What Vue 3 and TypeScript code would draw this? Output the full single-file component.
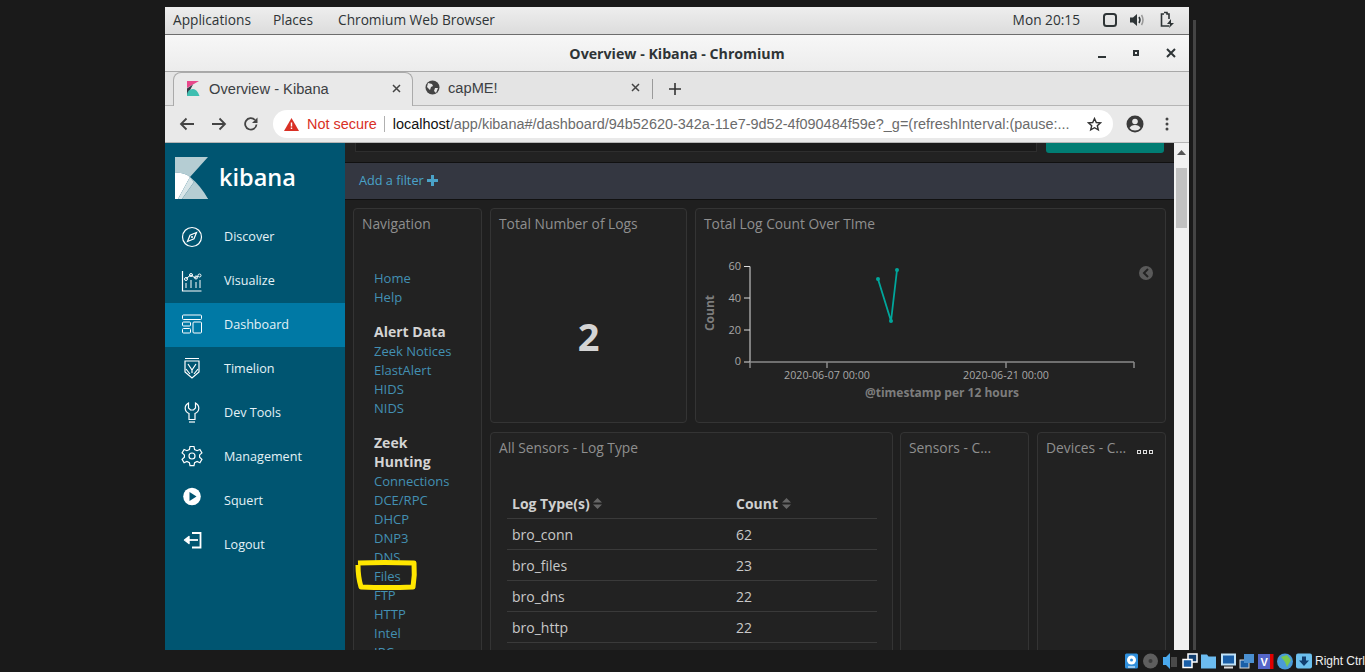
<script setup lang="ts">
interface NavGroup {
  titulo?: string
  links: string[]
}

const sideItems = [
  { nome: 'Discover', icone: 'discover' },
  { nome: 'Visualize', icone: 'visualize' },
  { nome: 'Dashboard', icone: 'dashboard' },
  { nome: 'Timelion', icone: 'timelion' },
  { nome: 'Dev Tools', icone: 'devtools' },
  { nome: 'Management', icone: 'management' },
  { nome: 'Squert', icone: 'squert' },
  { nome: 'Logout', icone: 'logout' }
]

const navGroups: NavGroup[] = [
  { links: ['Home', 'Help'] },
  { titulo: 'Alert Data', links: ['Zeek Notices', 'ElastAlert', 'HIDS', 'NIDS'] },
  {
    titulo: 'Zeek Hunting',
    links: ['Connections', 'DCE/RPC', 'DHCP', 'DNP3', 'DNS', 'Files', 'FTP', 'HTTP', 'Intel', 'IRC']
  }
]

const logRows = [
  { tipo: 'bro_conn', total: 62 },
  { tipo: 'bro_files', total: 23 },
  { tipo: 'bro_dns', total: 22 },
  { tipo: 'bro_http', total: 22 }
]
</script>

<template>
  <div class="screen">
    <div class="vm">
      <div class="gnomeBar">
        <span>Applications</span>
        <span>Places</span>
        <span class="appName">Chromium Web Browser</span>
        <span class="clock">Mon 20:15</span>
        <svg class="trayIcon first" width="16" height="16" viewBox="0 0 16 16">
          <rect x="2" y="2" width="12" height="12" rx="2.500" fill="none" stroke="#2e3436" stroke-width="2" />
        </svg>
        <svg class="trayIcon second" width="17" height="16" viewBox="0 0 17 16">
          <path d="M1 5.500h3l4-3.500v12l-4-3.500h-3z" fill="#2e3436" />
          <path d="M10 5q2 3 0 6" fill="none" stroke="#2e3436" stroke-width="1.500" />
          <path d="M12.500 3q3 5 0 10" fill="none" stroke="#999" stroke-width="1.500" />
        </svg>
        <svg class="trayIcon" width="16" height="18" viewBox="0 0 16 18">
          <path d="M5 1.500h3v1.500h2v5M10 15h-7.500v-12h2.500" fill="none" stroke="#2e3436" stroke-width="1.600" />
          <path d="M12 8l-4 5h3l-1 4 5-5h-3z" fill="#2e3436" />
        </svg>
      </div>

      <div class="titleBar">
        <span class="titleText">Overview - Kibana - Chromium</span>
        <div class="winButtons">
          <i class="winMin"></i>
          <i class="winMax"></i>
          <svg width="10" height="10" viewBox="0 0 10 10">
            <path d="M1 1l8 8M9 1l-8 8" stroke="#2e3436" stroke-width="2" />
          </svg>
        </div>
      </div>

      <div class="tabStrip">
        <div class="tab active">
          <svg width="13" height="15" viewBox="0 0 13 15">
            <path d="M0 0h12L0 7z" fill="#e8488b" />
            <path d="M0 7.500L6 3.500 0 15z" fill="#343741" />
            <path d="M0 15q0-7 6-7 4 0 6.500 7z" fill="#3ebeb0" />
          </svg>
          <span class="tabName">Overview - Kibana</span>
          <svg class="tabClose" width="9" height="9" viewBox="0 0 9 9">
            <path d="M1 1l7 7M8 1l-7 7" stroke="#444" stroke-width="1.500" />
          </svg>
        </div>
        <div class="tab second">
          <svg width="15" height="15" viewBox="0 0 15 15">
            <circle cx="7.500" cy="7.500" r="7" fill="#444" />
            <path d="M3 3l4 1 1 2-2 1-1 3-3-3zM10 8l3 0-2 5-2-2z" fill="#e8e8e8" />
          </svg>
          <span class="tabName">capME!</span>
          <svg class="tabClose" width="9" height="9" viewBox="0 0 9 9">
            <path d="M1 1l7 7M8 1l-7 7" stroke="#444" stroke-width="1.500" />
          </svg>
        </div>
        <i class="tabSep"></i>
        <svg class="newTab" width="12" height="12" viewBox="0 0 12 12">
          <path d="M6 0v12M0 6h12" stroke="#333" stroke-width="1.600" />
        </svg>
      </div>

      <div class="toolBar">
        <svg width="16" height="14" viewBox="0 0 16 14">
          <path d="M15 7H2M7.500 1.500L2 7l5.500 5.500" fill="none" stroke="#444" stroke-width="1.800" />
        </svg>
        <svg width="16" height="14" viewBox="0 0 16 14">
          <path d="M1 7h13M8.500 1.500L14 7l-5.500 5.500" fill="none" stroke="#444" stroke-width="1.800" />
        </svg>
        <svg width="16" height="16" viewBox="0 0 16 16">
          <path d="M13.500 8.500a5.700 5.700 0 1 1-1.500-4.500" fill="none" stroke="#444" stroke-width="1.800" />
          <path d="M14.500 1.500v5.500h-5.500z" fill="#444" />
        </svg>
        <div class="urlBar">
          <svg width="15" height="13" viewBox="0 0 15 13">
            <path d="M7.500 0L15 13H0z" fill="#d93025" />
            <path d="M6.800 4.500h1.400v4h-1.400zM6.800 9.500h1.400v1.400h-1.400z" fill="#fff" />
          </svg>
          <span class="notSecure">Not secure</span>
          <i class="urlSep"></i>
          <span class="url"><b>localhost</b>/app/kibana#/dashboard/94b52620-342a-11e7-9d52-4f090484f59e?_g=(refreshInterval:(pause:...</span>
          <svg class="star" width="15" height="15" viewBox="0 0 15 15">
            <path d="M7.500 1.500l1.800 4 4.200.4-3.200 2.800 1 4.200-3.800-2.200-3.800 2.200 1-4.200-3.200-2.800 4.200-.4z" fill="none" stroke="#333" stroke-width="1.400" />
          </svg>
        </div>
        <svg class="account" width="18" height="18" viewBox="0 0 18 18">
          <circle cx="9" cy="9" r="8.500" fill="#3a3a3a" />
          <circle cx="9" cy="6.500" r="2.800" fill="#e8e8e8" />
          <path d="M3.500 13q1.500-3 5.500-3t5.500 3q-2 2.500-5.500 2.500t-5.500-2.500z" fill="#e8e8e8" />
        </svg>
        <svg class="dots" width="4" height="14" viewBox="0 0 4 14">
          <circle cx="2" cy="2" r="1.500" fill="#444" />
          <circle cx="2" cy="7" r="1.500" fill="#444" />
          <circle cx="2" cy="12" r="1.500" fill="#444" />
        </svg>
      </div>

      <div class="page">
        <aside class="sidebar">
          <div class="logoRow">
            <svg width="33" height="42" viewBox="0 0 33 42">
              <path d="M0 0h33L15 20Q8 15 0 16z" fill="#b5cdd3" />
              <path d="M0 16Q8 15 15 20L3 42H0z" fill="#fff" />
              <path d="M3 42l12-22 4 5-12 17z" fill="#d8e5e8" />
              <path d="M7 42l12-17q7 8 14 17z" fill="#b5cdd3" />
              <path d="M15 20q11 9 18 22h-4q-5-11-12-19z" fill="#b5cdd3" />
            </svg>
            <span class="logoText">kibana</span>
          </div>
          <div
            v-for="item in sideItems"
            :key="item.nome"
            class="sideItem"
            :class="{ selected: item.nome === 'Dashboard' }"
          >
            <svg class="sideIcon" width="24" height="24" viewBox="0 0 24 24" fill="none" stroke="#fff" stroke-width="1">
              <template v-if="item.icone === 'discover'">
                <circle cx="12" cy="13" r="9.500" stroke-width="1.200" />
                <path d="M16.500 8.500l-6.500 2.800-2.500 6.200 6.500-2.700z" stroke-width="1.200" />
                <circle cx="12" cy="13" r="1" fill="#fff" stroke="none" />
              </template>
              <template v-else-if="item.icone === 'visualize'">
                <path d="M2.500 3v20h19" stroke-width="1.200" />
                <path d="M6 10.500l5-3.500 4 3 3-2" />
                <circle cx="6" cy="11" r="1.500" />
                <circle cx="11" cy="7" r="1.500" />
                <circle cx="16" cy="9.500" r="1.500" />
                <circle cx="19.500" cy="7.500" r="1.500" />
                <path d="M6 15v5M11 12v8M16 14v6M20 12v8" />
              </template>
              <template v-else-if="item.icone === 'dashboard'">
                <rect x="2.500" y="3" width="19" height="4.500" rx="1" />
                <rect x="2.500" y="10" width="8" height="4" rx="1" />
                <rect x="2.500" y="16.500" width="8" height="4.500" rx="1" />
                <rect x="13" y="10" width="8.500" height="11" rx="1" />
              </template>
              <template v-else-if="item.icone === 'timelion'">
                <path d="M5 2.500h14M5 5h14v11l-7 6-7-6z" stroke-width="1.200" />
                <path d="M8 8l4 6 4-6M12 14v3M6 13l4 5M18 13l-4 5" stroke-width="1.200" />
              </template>
              <template v-else-if="item.icone === 'devtools'">
                <path d="M8.500 3q-3.500 2-3.300 5.500.2 3.500 3.800 5v6h6v-6q3.600-1.500 3.800-5 .2-3.500-3.300-5.500v5l-2 2h-3l-2-2z" stroke-width="1.200" />
                <path d="M9 22h6" stroke-width="1.200" />
              </template>
              <template v-else-if="item.icone === 'management'">
                <path d="M10 2.500h4l.6 3 2.500 1.200 2.800-1.200 2 3.400-2.300 2 0 2.400 2.300 2-2 3.400-2.800-1.200-2.500 1.200-.6 3h-4l-.6-3-2.500-1.200-2.800 1.200-2-3.400 2.300-2 0-2.400-2.300-2 2-3.400 2.800 1.200 2.500-1.200z" stroke-width="1.200" />
                <circle cx="12" cy="12" r="3" stroke-width="1.200" />
              </template>
              <template v-else-if="item.icone === 'squert'">
                <circle cx="12" cy="8.500" r="8.800" fill="#fff" stroke="none" />
                <path d="M9.500 4l7 4.500-7 4.500z" fill="#005571" stroke="none" />
              </template>
              <template v-else>
                <path d="M12 1h8.500v14.500H12" stroke-width="1.800" />
                <path d="M18 8H8" stroke-width="1.800" />
                <path d="M9 4.500L4.500 8 9 11.500z" fill="#fff" stroke-width="1.400" stroke-linejoin="round" />
              </template>
            </svg>
            <span>{{ item.nome }}</span>
          </div>
        </aside>

        <main class="main">
          <div class="queryRow">
            <div class="queryInput"></div>
            <div class="queryButton"></div>
          </div>
          <div class="filterBar">
            <span>Add a filter</span>
            <svg width="11" height="11" viewBox="0 0 11 11">
              <path d="M5.500 0v11M0 5.500h11" stroke="#4aa3c9" stroke-width="3" />
            </svg>
          </div>

          <div class="dashboard">
            <section class="panel navPanel">
              <h3 class="panelTitle">Navigation</h3>
              <div class="navBody">
                <div v-for="(grupo, i) in navGroups" :key="i" class="navGroup">
                  <h4 v-if="grupo.titulo">{{ grupo.titulo }}</h4>
                  <a v-for="link in grupo.links" :key="link">{{ link }}</a>
                </div>
              </div>
              <svg class="marker" width="66" height="34" viewBox="0 0 66 34">
                <path d="M5 5q25-1 56 0 1 12-1 24-26 1-52 0-3-10-3-22" fill="none" stroke="#ffe600" stroke-width="5" stroke-linejoin="round" />
              </svg>
            </section>

            <div class="panelColumn">
              <div class="rowTop">
                <section class="panel totalPanel">
                  <h3 class="panelTitle">Total Number of Logs</h3>
                  <div class="bigNumber">2</div>
                </section>
                <section class="panel chartPanel">
                  <h3 class="panelTitle">Total Log Count Over TIme</h3>
                  <svg class="chart" width="469" height="175" viewBox="0 0 469 175">
                    <g fill="#a8a8a8" font-size="11" text-anchor="end">
                      <text x="45" y="31">60</text>
                      <text x="45" y="63">40</text>
                      <text x="45" y="95">20</text>
                      <text x="45" y="126">0</text>
                    </g>
                    <path d="M54 27.500v96M48 27.500h6M48 59h6M48 91h6M48 123h6" stroke="#ddd" fill="none" />
                    <path d="M54 123h384M54 123v6M131 123v6M310 123v6M438 123v6" stroke="#8a8a8a" stroke-width="1.500" fill="none" />
                    <text x="131" y="140" fill="#a8a8a8" font-size="10.700" text-anchor="middle">2020-06-07 00:00</text>
                    <text x="310" y="140" fill="#a8a8a8" font-size="10.700" text-anchor="middle">2020-06-21 00:00</text>
                    <text x="246" y="158" fill="#7d7d7d" font-size="12" font-weight="700" text-anchor="middle">@timestamp per 12 hours</text>
                    <text transform="translate(18 74) rotate(-90)" fill="#7d7d7d" font-size="12" font-weight="700" text-anchor="middle">Count</text>
                    <path d="M182 40l13 42 6-51" fill="none" stroke="#00a69b" stroke-width="1.800" />
                    <circle cx="182" cy="40" r="2" fill="#00a69b" />
                    <circle cx="195" cy="82" r="2" fill="#00a69b" />
                    <circle cx="201" cy="31" r="2" fill="#00a69b" />
                    <circle cx="450" cy="34" r="7" fill="#5a5a5a" />
                    <path d="M452 30l-4 4 4 4" fill="none" stroke="#222" stroke-width="2" />
                  </svg>
                </section>
              </div>
              <div class="rowBottom">
                <section class="panel logPanel">
                  <h3 class="panelTitle">All Sensors - Log Type</h3>
                  <table class="logTable">
                    <thead>
                      <tr>
                        <th>
                          Log Type(s)
                          <svg width="9" height="11" viewBox="0 0 9 11"><path d="M4.500 0L9 4.500H0zM4.500 11L0 6.500h9z" fill="#666" /></svg>
                        </th>
                        <th>
                          Count
                          <svg width="9" height="11" viewBox="0 0 9 11"><path d="M4.500 0L9 4.500H0zM4.500 11L0 6.500h9z" fill="#666" /></svg>
                        </th>
                      </tr>
                    </thead>
                    <tbody>
                      <tr v-for="linha in logRows" :key="linha.tipo">
                        <td>{{ linha.tipo }}</td>
                        <td>{{ linha.total }}</td>
                      </tr>
                    </tbody>
                  </table>
                </section>
                <section class="panel smallPanel">
                  <h3 class="panelTitle">Sensors - C...</h3>
                </section>
                <section class="panel smallPanel">
                  <h3 class="panelTitle">Devices - C...</h3>
                  <div class="panelMenu"><i></i><i></i><i></i></div>
                </section>
              </div>
            </div>
          </div>
        </main>

        <div class="scrollBar">
          <svg width="9" height="5" viewBox="0 0 9 5"><path d="M4.500 0L9 5H0z" fill="#555" /></svg>
          <div class="thumb"></div>
        </div>
      </div>
    </div>
    <i class="hostScroll"></i>

    <div class="hostBar">
      <svg width="188" height="18" viewBox="0 0 188 18">
        <rect x="0" y="1.500" width="13" height="15" rx="1.500" fill="#2f8fdc" />
        <circle cx="6.500" cy="8" r="4.500" fill="#fff" />
        <circle cx="6.500" cy="8" r="1.500" fill="#2f8fdc" />
        <path d="M3 15h7" stroke="#fff" />
        <circle cx="25.500" cy="9" r="7.500" fill="#5e5e5e" />
        <circle cx="25.500" cy="9" r="2" fill="#3a3a3a" />
        <path d="M38 5h3l4-4v16l-4-4h-3z" fill="#4aa8ec" />
        <rect x="46" y="5" width="6" height="10" fill="#4a4a4a" />
        <rect x="63" y="2" width="9" height="8" fill="#123f70" stroke="#fff" stroke-width="1.500" />
        <rect x="58" y="7.500" width="9" height="8" fill="#1a5fa8" stroke="#fff" stroke-width="1.500" />
        <path d="M76 2.500h6l1.500 2h7.500v12H76z" fill="#6cbcf0" />
        <rect x="97" y="2.500" width="13" height="10" fill="#1a5fa8" stroke="#bfe2f7" stroke-width="2" />
        <path d="M99 15.500h9" stroke="#ddd" stroke-width="2" />
        <rect x="115" y="8" width="9" height="8" fill="#1a5fa8" stroke="#ddd" />
        <rect x="119" y="2" width="10" height="9" fill="#4a8fd0" />
        <rect x="133" y="2" width="12" height="15" fill="#5566c8" />
        <text x="135.500" y="13.500" fill="#fff" font-size="11" font-weight="700" font-family="Liberation Sans, sans-serif">V</text>
        <rect x="145" y="2" width="3.500" height="15" fill="#e00000" />
        <circle cx="160" cy="9.500" r="8" fill="#4a9bd8" />
        <path d="M156 5l6-2 4 5-4 7-2-5z" fill="#78c850" />
        <rect x="171" y="1.500" width="16" height="15" rx="2" fill="#6cc0ee" />
        <path d="M177 4.500h4v4h3l-5 5.500-5-5.500h3z" fill="#123f70" />
      </svg>
      <span>Right Ctrl</span>
    </div>
  </div>
</template>

<style>
html,
body {
  background: #1a1a1a;
  overflow: hidden;
}
</style>

<style scoped>
.screen {
  position: relative;
  width: 1365px;
  height: 672px;
  padding-top: 7px;
  padding-left: 165px;
  box-sizing: border-box;
  background: #1a1a1a;
  overflow: hidden;
}

.vm {
  width: 1024px;
  height: 643px;
  display: flex;
  flex-direction: column;
}

.gnomeBar {
  height: 28px;
  flex: none;
  box-sizing: border-box;
  display: flex;
  align-items: center;
  padding: 0 0 2px 8px;
  gap: 22px;
  background: linear-gradient(#eeeeee, #dcdcdc);
  border-bottom: 1px solid #6d6d6d;
  font: 13.700px "Open Sans", sans-serif;
  color: #2e3436;
}

.appName {
  margin-left: 3px;
}

.clock {
  margin-left: auto;
}

.trayIcon {
  margin-left: -9px;
}

.trayIcon.first {
  margin-left: 0;
}

.trayIcon.second {
  margin-left: -11px;
}

.trayIcon:last-child {
  margin-right: 14px;
}

.titleBar {
  height: 37px;
  flex: none;
  position: relative;
  display: flex;
  align-items: center;
  justify-content: center;
  padding-top: 1px;
  background: linear-gradient(#f7f7f7, #ececec);
  border-bottom: 1px solid #a8a8a8;
  box-sizing: border-box;
}

.titleText {
  font: 700 14.200px "Open Sans", sans-serif;
  color: #2e3436;
}

.winButtons {
  position: absolute;
  right: 13px;
  top: 13px;
  display: flex;
  align-items: center;
  gap: 27px;
}

.winMin {
  width: 8px;
  height: 2px;
  background: #2e3436;
  margin-top: 8px;
}

.winMax {
  width: 2px;
  height: 2px;
  border: 2px solid #2e3436;
}

.tabStrip {
  height: 34px;
  flex: none;
  display: flex;
  align-items: flex-end;
  padding-left: 8px;
  background: #e4e4e4;
  border-bottom: 1px solid #b5b5b5;
  box-sizing: border-box;
}

.tab {
  width: 240px;
  height: 33px;
  box-sizing: border-box;
  display: flex;
  align-items: center;
  padding: 0 11px 2px 13px;
  gap: 9px;
  font: 14.670px "Liberation Sans", sans-serif;
  color: #3c4043;
}

.tab.active {
  background: #e9e9e9;
  border: 1px solid #aaaaaa;
  border-bottom: none;
  border-radius: 8px 8px 0 0;
  margin-bottom: -1px;
  height: 34px;
}

.tab.second {
  padding-left: 12px;
  padding-right: 13px;
  gap: 8px;
}

.tabName {
  flex: 1;
}

.tabSep {
  width: 1px;
  height: 20px;
  background: #9a9a9a;
  align-self: center;
  margin-left: -1px;
}

.newTab {
  align-self: center;
  margin-left: 16px;
}

.toolBar {
  height: 37px;
  flex: none;
  display: flex;
  align-items: center;
  padding-left: 14px;
  gap: 16px;
  background: #e9e9e9;
  border-bottom: 1px solid #b5b5b5;
  box-sizing: border-box;
}

.urlBar {
  width: 840px;
  height: 28px;
  flex: none;
  box-sizing: border-box;
  display: flex;
  align-items: center;
  padding: 0 11px;
  margin-left: -2px;
  gap: 8px;
  background: #fff;
  border-radius: 14px;
  font: 14.450px "Liberation Sans", sans-serif;
}

.notSecure {
  color: #d93025;
}

.urlSep {
  width: 1px;
  height: 16px;
  background: #b0b0b0;
  margin-left: -1px;
}

.url {
  color: #6b6b6b;
  white-space: nowrap;
}

.url b {
  font-weight: 400;
  color: #111;
}

.star {
  margin-left: auto;
}

.account {
  margin-left: -3px;
}

.dots {
  margin-left: 5px;
}

.page {
  flex: 1;
  min-height: 0;
  display: flex;
  overflow: hidden;
}

.sidebar {
  width: 180px;
  flex: none;
  background: #005571;
  font: 12.600px "Open Sans", sans-serif;
  color: #e4f2f7;
}

.logoRow {
  height: 72px;
  box-sizing: border-box;
  display: flex;
  align-items: flex-start;
  gap: 11px;
  padding: 14px 0 0 10px;
}

.logoText {
  font: 600 23.500px "Open Sans", sans-serif;
  color: #fff;
  margin-top: 4px;
}

.sideItem {
  height: 44px;
  box-sizing: border-box;
  display: flex;
  align-items: center;
  padding: 0 0 2px 15px;
  gap: 20px;
}

.sideItem.selected {
  background: #0079a5;
}

.sideIcon {
  flex: none;
  overflow: visible;
}

.main {
  width: 829px;
  flex: none;
  background: #1f1f1f;
  font-family: "Open Sans", sans-serif;
}

.queryRow {
  height: 19px;
  display: flex;
  gap: 9px;
  padding-left: 10px;
  background: #222;
}

.queryInput {
  width: 682px;
  height: 9px;
  background: #1a1a1a;
  border: 1px solid #2e2e2e;
  border-top: none;
  box-sizing: border-box;
}

.queryButton {
  width: 118px;
  height: 10px;
  background: #017d73;
  border-radius: 0 0 3px 3px;
}

.filterBar {
  height: 38px;
  box-sizing: border-box;
  display: flex;
  align-items: center;
  gap: 3px;
  padding: 0 0 2px 14px;
  background: #343741;
  border-top: 1px solid #111;
  border-bottom: 1px solid #111;
  color: #4aa3c9;
  font-size: 12.700px;
}

.dashboard {
  display: flex;
  gap: 8px;
  padding: 8px 8px 0 8px;
  height: 600px;
  background: #1f1f1f;
}

.panel {
  position: relative;
  box-sizing: border-box;
  background: #222222;
  border: 1px solid #343434;
  border-radius: 4px;
}

.panelTitle {
  margin: 0;
  padding: 5px 8px 0;
  font-size: 13.800px;
  font-weight: 400;
  line-height: 19px;
  color: #8f8f8f;
  white-space: nowrap;
}

.navPanel {
  width: 129px;
  flex: none;
}

.navBody {
  padding: 36px 20px 0;
}

.navGroup {
  margin-bottom: 15px;
}

.navGroup h4 {
  margin: 0;
  font-size: 14px;
  font-weight: 700;
  line-height: 19.500px;
  color: #d4d4d4;
}

.navGroup a {
  display: block;
  font-size: 13px;
  line-height: 19px;
  color: #4390b3;
}

.marker {
  position: absolute;
  left: -1px;
  top: 349px;
}

.panelColumn {
  flex: 1;
  min-width: 0;
  display: flex;
  flex-direction: column;
  gap: 9px;
}

.rowTop {
  height: 215px;
  flex: none;
  display: flex;
  gap: 8px;
}

.totalPanel {
  width: 197px;
  flex: none;
}

.bigNumber {
  margin-top: 77px;
  text-align: center;
  font-size: 38px;
  font-weight: 700;
  line-height: 52px;
  color: #d4d4d4;
}

.chartPanel {
  flex: 1;
  min-width: 0;
}

.chart {
  display: block;
  font-family: "Open Sans", sans-serif;
  margin-top: 6px;
}

.rowBottom {
  flex: 1;
  display: flex;
  gap: 8px;
}

.logPanel {
  width: 403px;
  flex: none;
  margin-right: -1px;
}

.smallPanel {
  width: 129px;
  flex: none;
}

.panelMenu {
  position: absolute;
  right: 12px;
  top: 17px;
  display: flex;
  gap: 2px;
}

.panelMenu i {
  width: 2px;
  height: 2px;
  border: 1px solid #ddd;
}

.logTable {
  width: 370px;
  margin: 31px 0 0 16px;
  border-collapse: collapse;
  font-size: 14px;
  color: #c8c8c8;
}

.logTable th {
  height: 30px;
  padding: 0 0 0 5px;
  text-align: left;
  font-weight: 700;
  color: #cfcfcf;
  border-bottom: 1px solid #3a3a3a;
}

.logTable th:first-child {
  width: 219px;
}

.logTable td {
  height: 31px;
  padding: 1px 0 0 5px;
  box-sizing: border-box;
  border-bottom: 1px solid #3a3a3a;
}

.scrollBar {
  width: 15px;
  flex: none;
  display: flex;
  flex-direction: column;
  align-items: center;
  background: #f1f1f1;
  padding-top: 7px;
  box-sizing: border-box;
}

.thumb {
  width: 11px;
  height: 60px;
  margin-top: 13px;
  background: #c1c1c1;
}

.hostScroll {
  position: absolute;
  left: 1193px;
  top: 20px;
  width: 3px;
  height: 630px;
  background: #444;
}

.hostBar {
  position: absolute;
  right: 0;
  bottom: 0;
  height: 22px;
  display: flex;
  align-items: center;
  gap: 2px;
  color: #eee;
  font: 12px "Liberation Sans", sans-serif;
}
</style>
